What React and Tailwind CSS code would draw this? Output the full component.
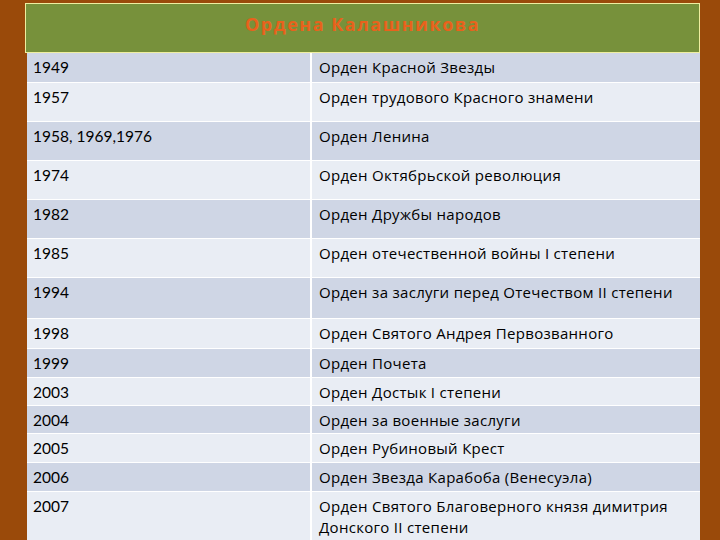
import React from 'react';

const rows = [
  { year: '1949', name: 'Орден Красной Звезды', h: 'h-[30px]', odd: true },
  { year: '1957', name: 'Орден трудового Красного знамени', h: 'h-[39px]' },
  { year: '1958, 1969,1976', name: 'Орден Ленина', h: 'h-[39px]', odd: true },
  { year: '1974', name: 'Орден Октябрьской революция', h: 'h-[39px]' },
  { year: '1982', name: 'Орден Дружбы народов', h: 'h-[39px]', odd: true },
  { year: '1985', name: 'Орден отечественной войны I степени', h: 'h-[39px]' },
  { year: '1994', name: 'Орден за заслуги перед Отечеством II степени', h: 'h-[41px]', odd: true },
  { year: '1998', name: 'Орден Святого Андрея Первозванного', h: 'h-[30px]' },
  { year: '1999', name: 'Орден Почета', h: 'h-[29px]', odd: true },
  { year: '2003', name: 'Орден Достык I степени', h: 'h-[28px]' },
  { year: '2004', name: 'Орден за военные заслуги', h: 'h-[28px]', odd: true },
  { year: '2005', name: 'Орден Рубиновый Крест', h: 'h-[29px]' },
  { year: '2006', name: 'Орден Звезда Карабоба (Венесуэла)', h: 'h-[29px]', odd: true },
  { year: '2007', name: 'Орден Святого Благоверного князя димитрия Донского II степени', h: 'h-[60px]' },
];

const App = () => {
  return (
    <div className="h-[540px] w-[720px] overflow-hidden bg-[#9a4a0a] pl-[25px] pr-[20px] pt-[3px]">
      {/* Header */}
      <div className="h-[50px] border border-[#eeeea0] bg-[#77913b] pt-[8px] text-center">
        <span className="font-['Open_Sans',sans-serif] text-[18px] font-bold leading-[24px] tracking-[1.5px] text-[#e8621c]">
          Ордена Калашникова
        </span>
      </div>

      {/* Body */}
      <div className="ml-[2px]">
        {rows.map((row) => (
          <div
            key={row.year}
            className={`flex border-b border-white ${row.h} ${row.odd ? 'bg-[#cfd6e5]' : 'bg-[#e9edf4]'}`}
          >
            <div className="w-[285px] shrink-0 border-r-2 border-white pl-[6px] pt-[4px] font-['Lato',sans-serif] text-[15.5px] leading-[20px] text-black">
              {row.year}
            </div>
            <div className="w-[380px] pl-[7px] pt-[4px] font-['Open_Sans',sans-serif] text-[15px] leading-[21px] tracking-[0.3px] text-black">
              {row.name}
            </div>
          </div>
        ))}
      </div>
    </div>
  );
};

export default App;
